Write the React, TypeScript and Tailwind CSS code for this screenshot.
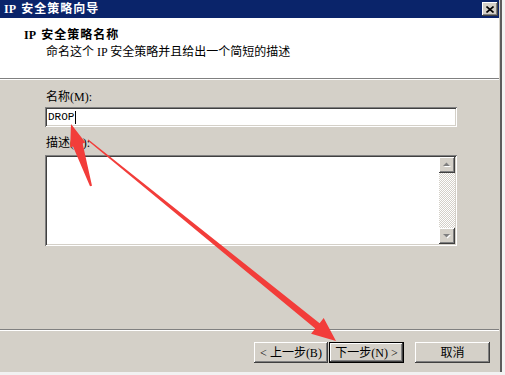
import React from "react";

const raised =
  "shadow-[inset_-1px_-1px_#404040,inset_1px_1px_#ffffff,inset_-2px_-2px_#808080,inset_2px_2px_#d4d0c8]";
const sunken =
  "shadow-[inset_1px_1px_#808080,inset_-1px_-1px_#ffffff,inset_2px_2px_#404040,inset_-2px_-2px_#d4d0c8]";

function ScrollBtn({ up }: { up: boolean }) {
  return (
    <div className={`w-[16px] h-[16px] bg-[#d4d0c8] ${raised} flex items-center justify-center`}>
      <svg width="16" height="16" viewBox="0 0 16 16">
        {up ? (
          <>
            <polygon points="5,10 12,10 8.5,6.5" fill="#ffffff" />
            <polygon points="4,9 11,9 7.5,5.5" fill="#808080" />
          </>
        ) : (
          <>
            <polygon points="5,7 12,7 8.5,10.5" fill="#ffffff" />
            <polygon points="4,6 11,6 7.5,9.5" fill="#808080" />
          </>
        )}
      </svg>
    </div>
  );
}

export default function App() {
  return (
    <div className="relative w-[505px] h-[375px] bg-[#f2f2f2] overflow-hidden font-['Liberation_Serif','Noto_Sans_CJK_SC',serif] text-black">
      <div className="w-[502px] h-[372px] border-r-2 border-[#5c5c5c] bg-[#d4d0c8] pr-[1px] flex flex-col">
        {/* title bar */}
        <div className="h-[18px] bg-[#0a246a] flex items-center pl-[4px] pr-[1px] shrink-0">
          <span className="text-white font-bold text-[12px] leading-[18px] whitespace-pre">
            IP  <span className="tracking-[1px]">安全策略向导</span>
          </span>
          <div className={`ml-auto w-[16px] h-[14px] bg-[#d4d0c8] ${raised} flex items-center justify-center`}>
            <svg width="8" height="7" viewBox="0 0 8 7">
              <path d="M0.5 0.5L7.5 6.5M7.5 0.5L0.5 6.5" stroke="#000" strokeWidth="1.6" />
            </svg>
          </div>
        </div>
        {/* header */}
        <div className="h-[60px] bg-white pt-[9px] shrink-0">
          <div className="pl-[24px] text-[12px] leading-[17px] font-bold whitespace-pre">
            IP  <span className="tracking-[1px]">安全策略名称</span>
          </div>
          <div className="pl-[46px] text-[12px] leading-[17px] whitespace-pre">
            命名这个 IP 安全策略并且给出一个简短的描述
          </div>
        </div>
        <div className="h-[1px] bg-[#808080] shrink-0" />
        <div className="h-[1px] bg-white shrink-0" />
        {/* content */}
        <div className="flex-1 pl-[45px] pt-[9px] flex flex-col">
          <div className="pl-[1px] text-[12px] leading-[16px] h-[16px]">名称(M):</div>
          <div className={`mt-[2px] w-[412px] h-[20px] bg-white ${sunken} flex items-center pl-[3px]`}>
            <span className="font-['Liberation_Mono',monospace] text-[11px] leading-[14px]">DROP</span>
            <span className="ml-[1px] w-[1px] h-[13px] bg-black" />
          </div>
          <div className="mt-[8px] pl-[1px] text-[12px] leading-[16px] h-[16px]">描述(D):</div>
          <div className={`mt-[4px] w-[412px] h-[91px] bg-white ${sunken} p-[2px] flex`}>
            <div className="flex-1" />
            <div className="w-[16px] flex flex-col">
              <ScrollBtn up={true} />
              <div className="flex-1 bg-[repeating-conic-gradient(#d4d0c8_0_25%,#ffffff_0_50%)] bg-[length:2px_2px]" />
              <ScrollBtn up={false} />
            </div>
          </div>
        </div>
        <div className="h-[1px] bg-[#808080] shrink-0" />
        <div className="h-[1px] bg-white shrink-0" />
        {/* buttons */}
        <div className="h-[41px] shrink-0 flex justify-end items-start pt-[11px] pr-[9px] text-[12px]">
          <div className={`w-[74px] h-[21px] ${raised} flex items-center justify-center whitespace-pre leading-[14px]`}>
            {"< 上一步(B)"}
          </div>
          <div className="ml-[1px] w-[75px] h-[21px] border border-black">
            <div className={`w-full h-full ${raised} flex items-center justify-center whitespace-pre leading-[14px]`}>
              {"下一步(N) >"}
            </div>
          </div>
          <div className={`ml-[11px] w-[75px] h-[21px] ${raised} flex items-center justify-center leading-[14px]`}>
            取消
          </div>
        </div>
      </div>
      {/* annotation arrows */}
      <svg className="absolute inset-0 pointer-events-none" width="505" height="375" viewBox="0 0 505 375">
        <polygon
          points="71,124 85.4,142.4 82.6,143.4 92,185.7 90,186.3 73,146.4 70.2,147.4"
          fill="#f23d3a"
        />
        <polygon
          points="88.4,139.5 319.6,323.2 323.7,318.1 336,341 311.1,333.7 315.2,328.6 87.6,140.5"
          fill="#f23d3a"
        />
      </svg>
    </div>
  );
}
